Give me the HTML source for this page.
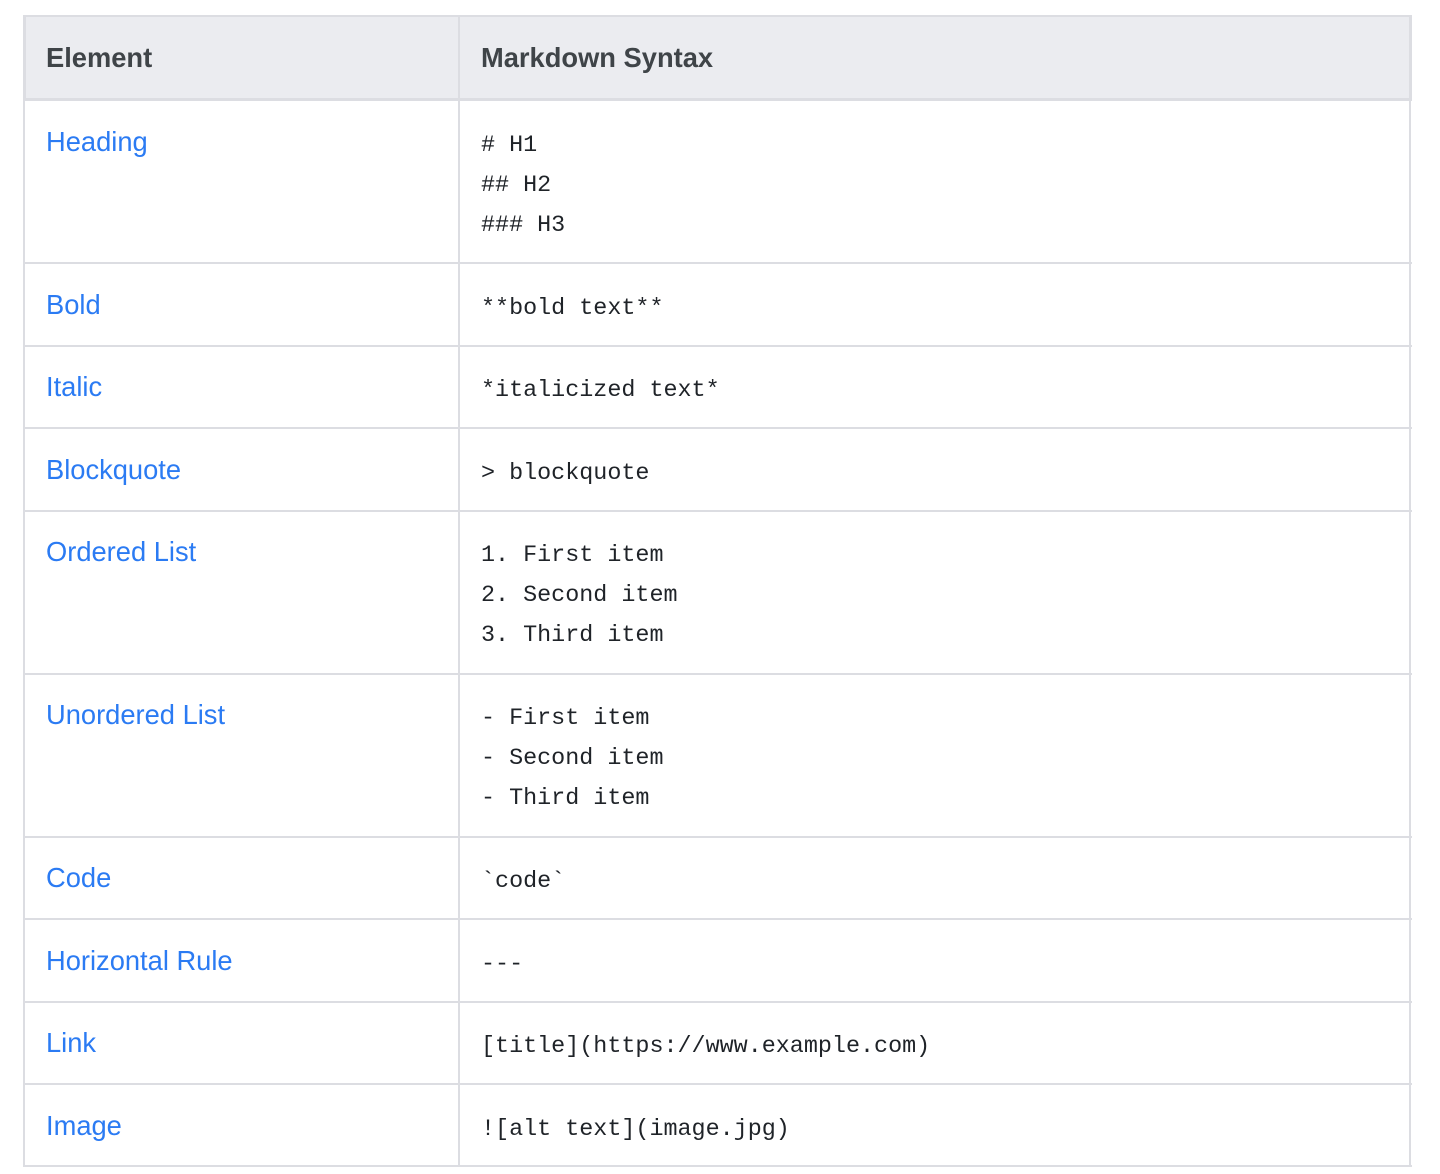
<!DOCTYPE html>
<html><head><style>
html,body{margin:0;padding:0;background:#fff;width:1440px;height:1174px;overflow:hidden}
.r{position:absolute;left:24px;width:1388px;border-top:2px solid #dcdde2;box-sizing:border-box}
.h{position:absolute;left:24px;top:15px;width:1388px;height:86px;background:#ebecf0;border:2px solid #dcdde2;border-bottom:3px solid #dcdde2;box-sizing:border-box}
.vl{position:absolute;top:15px;width:2px;height:1152px;background:#dcdde2}
.lab{position:absolute;left:46px;font:27.3px/40px "Liberation Sans",sans-serif;color:#2b7bf3}
.hd{position:absolute;font:bold 27.3px/40px "Liberation Sans",sans-serif;color:#3f4448;top:38px}
.m{position:absolute;left:481px;font:23.4px/40px "Liberation Mono",monospace;color:#1f2328;white-space:pre}
</style></head><body>
<div class="h"></div>
<div class="hd" style="left:46px">Element</div>
<div class="hd" style="left:481px">Markdown Syntax</div>

<div class="r" style="top:262px"></div>
<div class="r" style="top:345px"></div>
<div class="r" style="top:427px"></div>
<div class="r" style="top:510px"></div>
<div class="r" style="top:673px"></div>
<div class="r" style="top:836px"></div>
<div class="r" style="top:918px"></div>
<div class="r" style="top:1001px"></div>
<div class="r" style="top:1083px"></div>
<div class="r" style="top:1165px"></div>
<div class="vl" style="left:23px"></div>
<div class="vl" style="left:458px"></div>
<div class="vl" style="left:1409px"></div>

<div class="lab" style="top:122px">Heading</div>
<div class="m" style="top:126px"># H1
## H2
### H3</div>
<div class="lab" style="top:285px">Bold</div>
<div class="m" style="top:289px">**bold text**</div>
<div class="lab" style="top:367px">Italic</div>
<div class="m" style="top:371px">*italicized text*</div>
<div class="lab" style="top:450px">Blockquote</div>
<div class="m" style="top:454px">&gt; blockquote</div>
<div class="lab" style="top:532px">Ordered List</div>
<div class="m" style="top:536px">1. First item
2. Second item
3. Third item</div>
<div class="lab" style="top:695px">Unordered List</div>
<div class="m" style="top:699px">- First item
- Second item
- Third item</div>
<div class="lab" style="top:858px">Code</div>
<div class="m" style="top:862px">`code`</div>
<div class="lab" style="top:941px">Horizontal Rule</div>
<div class="m" style="top:945px">---</div>
<div class="lab" style="top:1023px">Link</div>
<div class="m" style="top:1027px">[title](https://www.example.com)</div>
<div class="lab" style="top:1106px">Image</div>
<div class="m" style="top:1110px">![alt text](image.jpg)</div>
</body></html>
